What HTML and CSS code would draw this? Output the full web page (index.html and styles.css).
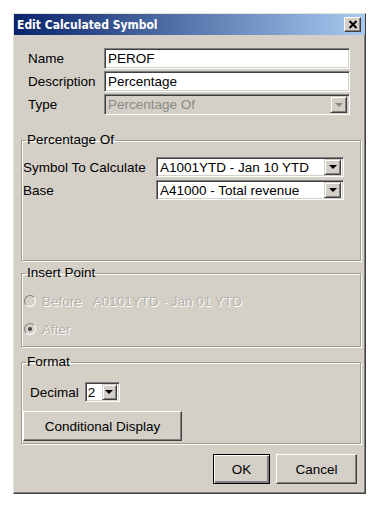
FILE: index.html
```html
<!DOCTYPE html>
<html lang="en">
<head>
    <meta charset="UTF-8">
    <title>Edit Calculated Symbol</title>
    <link rel="stylesheet" href="styles.css">
</head>
<body>
    <div class="dialog">
        <div class="titlebar">
            <span class="title">Edit Calculated Symbol</span>
            <span class="close-btn">
                <svg width="10" height="9" viewBox="0 0 10 9"><path d="M1.5 1 L8.5 8 M8.5 1 L1.5 8" stroke="#000" stroke-width="2"/></svg>
            </span>
        </div>

        <div class="content">
            <div class="props">
                <span class="lbl">Name</span>
                <div class="field">PEROF</div>
                <span class="lbl">Description</span>
                <div class="field">Percentage</div>
                <span class="lbl">Type</span>
                <div class="combo disabled"><span class="combo-text">Percentage Of</span><span class="arrow"></span></div>
            </div>

            <fieldset class="group">
                <legend>Percentage Of</legend>
                <div class="pct-body">
                    <span class="lbl">Symbol To Calculate</span>
                    <div class="combo"><span class="combo-text">A1001YTD - Jan 10 YTD</span><span class="arrow"></span></div>
                    <span class="lbl">Base</span>
                    <div class="combo"><span class="combo-text">A41000 - Total revenue</span><span class="arrow"></span></div>
                </div>
            </fieldset>

            <fieldset class="group">
                <legend>Insert Point</legend>
                <div class="insert-body">
                    <div class="radio-row">
                        <span class="radio"></span>
                        <span class="dim">Before</span>
                        <span class="dim symbol-ref">A0101YTD - Jan 01 YTD</span>
                    </div>
                    <div class="radio-row">
                        <span class="radio checked"></span>
                        <span class="dim">After</span>
                    </div>
                </div>
            </fieldset>

            <fieldset class="group format-group">
                <legend>Format</legend>
                <div class="format-body">
                    <div class="decimal-row">
                        <span class="lbl">Decimal</span>
                        <div class="combo small"><span class="combo-text">2</span><span class="arrow"></span></div>
                    </div>
                    <button class="btn cond-btn">Conditional Display</button>
                </div>
            </fieldset>
        </div>

        <div class="footer">
            <button class="btn default ok-btn">OK</button>
            <button class="btn cancel-btn">Cancel</button>
        </div>
    </div>
</body>
</html>
```

FILE: styles.css
```css
body {
    margin: 0;
    background: #fff;
    font-family: "Liberation Sans", Arial, sans-serif;
    font-size: 13.5px;
    color: #000;
}

.dialog {
    width: 353px;
    margin: 13px 0 0 13px;
    box-sizing: border-box;
    background: #d4d0c8;
    border: 1px solid;
    border-color: #e4e2dc #404040 #404040 #e4e2dc;
    box-shadow: inset -1px -1px 0 #808080;
}

.titlebar {
    height: 21px;
    display: flex;
    align-items: center;
    justify-content: space-between;
    padding: 0 4px 0 3px;
    background: linear-gradient(to right, #0a246a, #a6caf0);
}

.title {
    color: #fff;
    font-family: "DejaVu Sans Condensed", "DejaVu Sans", sans-serif;
    font-weight: bold;
    font-size: 12px;
}

.close-btn {
    width: 17px;
    height: 15px;
    box-sizing: border-box;
    display: flex;
    align-items: center;
    justify-content: center;
    background: #d4d0c8;
    border: 1px solid;
    border-color: #fff #404040 #404040 #fff;
    box-shadow: inset -1px -1px 0 #808080;
}

.content {
    padding: 0 4px 0 7px;
}

.props {
    display: grid;
    grid-template-columns: 76px 1fr;
    grid-auto-rows: 21px;
    row-gap: 2px;
    align-items: center;
    padding: 13px 11px 0 7px;
}

.lbl {
    white-space: nowrap;
}

.field, .combo {
    height: 21px;
    box-sizing: border-box;
    background: #fff;
    border: 1px solid;
    border-color: #808080 #fff #fff #808080;
    box-shadow: inset 1px 1px 0 #404040, inset -1px -1px 0 #d4d0c8;
    padding: 0 3px;
    display: flex;
    align-items: center;
    white-space: nowrap;
}

.combo {
    padding: 0 2px 0 3px;
    justify-content: space-between;
}

.combo-text {
    overflow: hidden;
}

.arrow {
    width: 17px;
    height: 17px;
    flex: none;
    box-sizing: border-box;
    display: flex;
    align-items: center;
    justify-content: center;
    background: #d4d0c8;
    border: 1px solid;
    border-color: #d4d0c8 #404040 #404040 #d4d0c8;
    box-shadow: inset 1px 1px 0 #fff, inset -1px -1px 0 #808080;
}

.arrow::after {
    content: "";
    border-left: 4px solid transparent;
    border-right: 4px solid transparent;
    border-top: 4px solid #000;
}

.combo.disabled {
    background: #d4d0c8;
    color: #8a8a86;
}

.combo.disabled .arrow::after {
    border-top-color: #8a8a86;
}

.group {
    margin: 17px 0 0 0;
    padding: 0;
    min-width: 0;
    border: 1px solid #a09c94;
    box-shadow: 1px 1px 0 #fff, inset 1px 1px 0 #fff;
}

.group + .group {
    margin-top: 4px;
}

.group.format-group {
    margin-top: 7px;
}

.group legend {
    margin-left: 4px;
    padding: 0 1px;
    line-height: 16px;
}

.pct-body {
    display: grid;
    grid-template-columns: 133px 188px;
    grid-auto-rows: 20px;
    row-gap: 3px;
    align-items: center;
    align-content: start;
    height: 112px;
    box-sizing: border-box;
    padding: 9px 0 0 1px;
}

.pct-body .combo {
    height: 20px;
}

.pct-body .arrow {
    height: 16px;
}

.insert-body {
    display: flex;
    flex-direction: column;
    gap: 8px;
    padding: 10px 0 7px 2px;
}

.radio-row {
    height: 20px;
    display: flex;
    align-items: center;
    gap: 6px;
}

.radio {
    width: 12px;
    height: 12px;
    box-sizing: border-box;
    border-radius: 50%;
    border: 1px solid;
    border-color: #808080 #fff #fff #808080;
    background: #d4d0c8;
    display: flex;
    align-items: center;
    justify-content: center;
}

.radio.checked::after {
    content: "";
    width: 4px;
    height: 4px;
    border-radius: 50%;
    background: #404040;
}

.dim {
    color: #b4b1aa;
    text-shadow: 1px 1px 0 #fff;
}

.symbol-ref {
    margin-left: 5px;
}

.format-body {
    display: flex;
    flex-direction: column;
    align-items: flex-start;
    gap: 9px;
    padding: 12px 0 2px 1px;
}

.decimal-row {
    display: flex;
    align-items: center;
    gap: 6px;
    padding-left: 7px;
}

.combo.small {
    width: 35px;
    height: 20px;
    padding-left: 2px;
}

.combo.small .arrow {
    width: 15px;
    height: 16px;
}

.btn {
    font-family: "Liberation Sans", Arial, sans-serif;
    font-size: 13.5px;
    color: #000;
    background: #d4d0c8;
    border: 1px solid;
    border-color: #fff #404040 #404040 #fff;
    box-shadow: inset -1px -1px 0 #808080;
    padding: 0;
}

.btn.default {
    border-color: #000;
    box-shadow: inset 1px 1px 0 #fff, inset -2px -2px 0 #808080;
}

.cond-btn {
    width: 159px;
    height: 30px;
}

.footer {
    display: flex;
    justify-content: flex-end;
    gap: 6px;
    padding: 10px 8px 9px 0;
}

.ok-btn {
    width: 57px;
    height: 30px;
}

.cancel-btn {
    width: 81px;
    height: 30px;
}
```
